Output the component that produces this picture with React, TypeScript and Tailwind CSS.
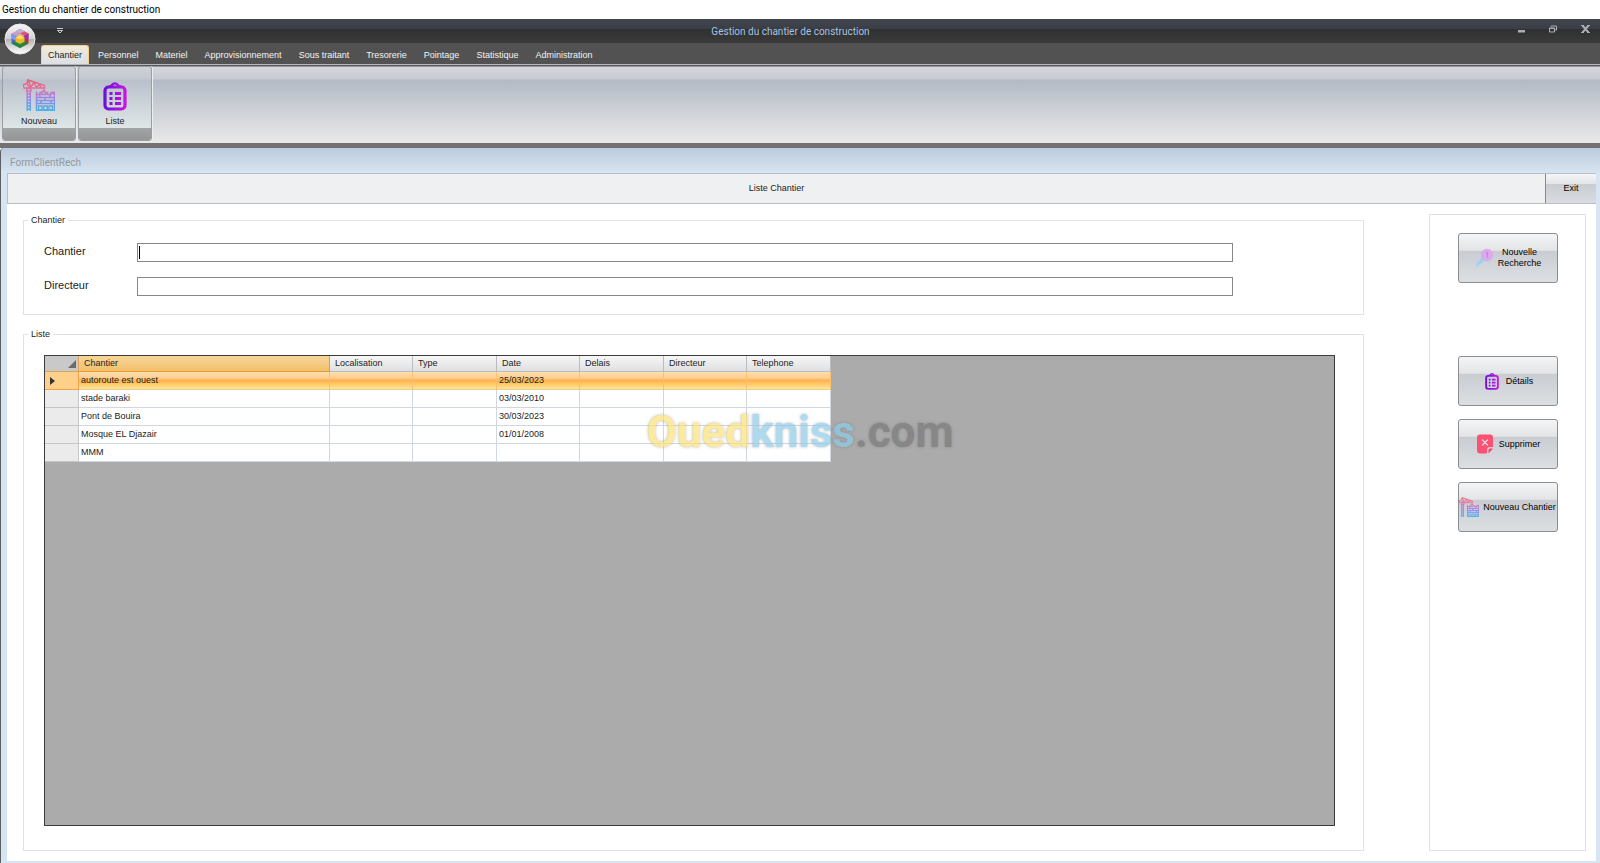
import { useState, type ReactNode } from 'react'

interface Chantier {
  nom: string
  localisation: string
  type: string
  date: string
  delais: string
  directeur: string
  telephone: string
}

const tabs = [
  'Chantier',
  'Personnel',
  'Materiel',
  'Approvisionnement',
  'Sous traitant',
  'Tresorerie',
  'Pointage',
  'Statistique',
  'Administration',
]

const columns: { key: keyof Chantier; label: string; width: string }[] = [
  { key: 'nom', label: 'Chantier', width: 'w-[251px]' },
  { key: 'localisation', label: 'Localisation', width: 'w-[83px]' },
  { key: 'type', label: 'Type', width: 'w-[84px]' },
  { key: 'date', label: 'Date', width: 'w-[83px]' },
  { key: 'delais', label: 'Delais', width: 'w-[84px]' },
  { key: 'directeur', label: 'Directeur', width: 'w-[83px]' },
  { key: 'telephone', label: 'Telephone', width: 'w-[84px]' },
]

const empty = { localisation: '', type: '', delais: '', directeur: '', telephone: '' }

const chantiers: Chantier[] = [
  { ...empty, nom: 'autoroute est ouest', date: '25/03/2023' },
  { ...empty, nom: 'stade baraki', date: '03/03/2010' },
  { ...empty, nom: 'Pont de Bouira', date: '30/03/2023' },
  { ...empty, nom: 'Mosque EL Djazair', date: '01/01/2008' },
  { ...empty, nom: 'MMM', date: '' },
]

function CraneIcon({ id, className }: { id: string; className: string }) {
  return (
    <svg viewBox="0 0 32 32" className={className} fill="none" stroke={`url(#${id})`} aria-hidden="true">
      <defs>
        <linearGradient id={id} gradientUnits="userSpaceOnUse" x1="0" y1="0" x2="0" y2="32">
          <stop offset="0" stopColor="#f0566f" />
          <stop offset="0.3" stopColor="#e4709f" />
          <stop offset="0.55" stopColor="#a67fe8" />
          <stop offset="1" stopColor="#3fb4ea" />
        </linearGradient>
      </defs>
      {/* jib */}
      <path d="M0.500 8.500V5.500l3.500-1L5 1l16.500 5.500V9H0.500M4 5l3 3.500M5 1l3 7 3-4.500 2.500 5 2.500-3 2.500 3M21 9v3.500" strokeWidth="1.400" />
      <path d="M18.500 12.500h4" strokeWidth="1.600" />
      {/* mast */}
      <path d="M3.500 9.500h4.500V12H3.500zM4.200 12v20M7.300 12v20M4.200 15h3M4.200 18h3M4.200 21h3M4.200 24h3M4.200 27h3M4.200 30h3" strokeWidth="1.400" />
      {/* building */}
      <path d="M13.500 12.500v19h18v-19M13.500 15.500h3.500v-2h2v2h3.500v-2h2v2h3.500v-2h2v2M13.500 18.500h18M13.500 21.500h18M13.500 24.500h18M17 15.500v3M22 18.500v3M27 15.500v3M18 21.500v3M28 21.500v3" strokeWidth="1.500" />
      <path d="M15.500 27h3.500v4h-3.500zM20.800 27h3.500v4h-3.500zM26 27h3.500v4H26z" strokeWidth="1.400" />
    </svg>
  )
}

function ClipboardIcon({ id, className }: { id: string; className: string }) {
  return (
    <svg viewBox="0 0 24 29" className={className} fill="none" aria-hidden="true">
      <defs>
        <linearGradient id={id} gradientUnits="userSpaceOnUse" x1="0" y1="0" x2="24" y2="0">
          <stop offset="0" stopColor="#6212d8" />
          <stop offset="1" stopColor="#cf14e6" />
        </linearGradient>
      </defs>
      <g stroke={`url(#${id})`}>
        <rect x="2" y="5" width="20" height="22" rx="3.500" strokeWidth="3.200" />
        <path d="M6.500 5c.3-1.200 1.200-1.500 2.200-1.500C9.500 1.700 10.500 1.300 12 1.300s2.500.4 3.300 2.200c1 0 1.900.3 2.200 1.500" strokeWidth="2.200" />
        <path d="M6.500 11.500h3M12 11.500h6M6.500 16.500h3M12 16.500h6M6.500 21.500h3M12 21.500h6" strokeWidth="3" />
      </g>
    </svg>
  )
}

function SearchIcon() {
  return (
    <svg viewBox="0 0 20 20" className="size-5 shrink-0" fill="none" aria-hidden="true">
      <defs>
        <linearGradient id="search" gradientUnits="userSpaceOnUse" x1="17" y1="3" x2="2" y2="18">
          <stop offset="0" stopColor="#eba6ec" />
          <stop offset="0.5" stopColor="#c3b4f0" />
          <stop offset="0.7" stopColor="#9fd0f2" />
          <stop offset="1" stopColor="#9edcf5" />
        </linearGradient>
      </defs>
      <circle cx="13" cy="7" r="5.500" fill="#dca8ee" stroke="url(#search)" strokeWidth="1.500" />
      <path d="M9 11l-6 6" stroke="url(#search)" strokeWidth="3.500" strokeLinecap="round" />
      <path d="M12 5.500l1.500-1V10" stroke="#c486ea" strokeWidth="1.200" />
    </svg>
  )
}

function DeleteIcon() {
  return (
    <svg viewBox="0 0 20 20" className="size-5 shrink-0" aria-hidden="true">
      <path d="M5 0.500h10a3 3 0 0 1 3 3V13h-3a3 3 0 0 0-3 3v3.500H5a3 3 0 0 1-3-3v-13a3 3 0 0 1 3-3z" fill="#fb5273" />
      <path d="M13.500 19.500V16a1.500 1.500 0 0 1 1.500-1.500h3z" fill="#fb4168" />
      <path d="M7.500 6l5 5M12.500 6l-5 5" stroke="#ffd5dd" strokeWidth="1.300" strokeLinecap="round" />
    </svg>
  )
}

function AppOrb() {
  return (
    <svg viewBox="0 0 32 32" className="size-8" aria-hidden="true">
      <defs>
        <linearGradient id="orb" x1="0" y1="0" x2="0" y2="1">
          <stop offset="0" stopColor="#f6f6f6" />
          <stop offset="0.48" stopColor="#d4d4d6" />
          <stop offset="0.52" stopColor="#b4b4b8" />
          <stop offset="1" stopColor="#ffffff" />
        </linearGradient>
      </defs>
      <circle cx="16" cy="16" r="15" fill="url(#orb)" stroke="#e9e9e9" />
      <path d="M16 6l8.500 4.500L16 15 7.500 10.500z" fill="#c9a0c8" />
      <path d="M16 6l8.500 4.500-4 2.200-8.700-4.500z" fill="#e2566a" />
      <path d="M16 6l-4.200 2.200 4.200 2.300 4.200-2.300z" fill="#b9b4dc" />
      <path d="M7.500 10.500L16 15v10l-8.500-4.500z" fill="#4667d8" />
      <path d="M7.500 10.500l4.200 2.200v5L7.500 15.500z" fill="#8798e6" />
      <path d="M24.500 10.500L16 15v10l8.500-4.500z" fill="#c92a35" />
      <path d="M24.500 10.500l-4.200 2.200v5l4.200-2.200z" fill="#8c3bb5" />
      <path d="M16 20l4.200-2.200 4.300 2.700L16 25l-8.500-4.500 4.200-2.700z" fill="#1f8a3a" />
      <path d="M16 12l4.500 2.300v4.500L16 21l-4.500-2.200v-4.500z" fill="#f0b92c" />
      <path d="M16 12l4.500 2.300L16 16.500l-4.500-2.200z" fill="#fbdc57" />
    </svg>
  )
}

function RibbonButton({ label, children }: { label: string; children: ReactNode }) {
  return (
    <button className="flex h-[75px] w-[74px] flex-col overflow-hidden rounded-[3px] border border-[#9a9da3] bg-[linear-gradient(#cfd2d7_0,#c3c8cf_12px,#b9c0ca_13px,#dfe7e8_62px)] shadow-[1px_0_0_#eceef0]">
      <span className="flex w-full flex-1 flex-col items-center justify-end gap-1 pb-px">
        {children}
        <span className="leading-3">{label}</span>
      </span>
      <span className="h-3 w-full bg-linear-to-b from-[#a2a5a5] to-[#949696]" />
    </button>
  )
}

function SideButton({ icon, children }: { icon: ReactNode; children: ReactNode }) {
  return (
    <button className="flex h-[50px] w-[100px] items-center justify-center gap-1 rounded-[3px] border border-[#8b8d90] bg-[linear-gradient(#f4f5f6_0%,#e2e4e5_34%,#c9cdd2_36%,#dcdfe2_100%)] text-center leading-[11px] whitespace-nowrap">
      {icon}
      <span>{children}</span>
    </button>
  )
}

export default function App() {
  const [activeTab, setActiveTab] = useState('Chantier')
  const [selected, setSelected] = useState(0)
  const [nom, setNom] = useState('')
  const [directeur, setDirecteur] = useState('')

  return (
    <div className="relative flex min-h-screen flex-col bg-white font-['Liberation_Sans',Arial,sans-serif] text-[9px] text-[#1c1c1c]">
      <div className="h-[19px] pl-0.5 font-['Roboto',sans-serif] text-[10px] leading-5 text-black">
        Gestion du chantier de construction
      </div>

      {/* Title bar and tabs */}
      <header className="relative">
        <div className="flex h-6 items-center bg-[linear-gradient(#41464f_0%,#3b3e47_40%,#2f3031_42%,#3b3b3b_100%)]">
          <button aria-label="Personnaliser" className="ml-[57px] text-[#c4c8cc]">
            <svg viewBox="0 0 6 6" className="size-1.5" fill="none" stroke="currentColor" aria-hidden="true">
              <path d="M0 0.500h6M0.500 2.500h5L3 5z" />
            </svg>
          </button>
          <h1 className="flex-1 text-center font-['Roboto',sans-serif] text-[10px] text-[#a9c4e6]">
            Gestion du chantier de construction
          </h1>
          <div className="flex items-center gap-6 pr-2.5 pb-1 text-[#a9aeb4]">
            <button aria-label="Réduire">
              <svg viewBox="0 0 7 8" className="h-2 w-[7px]" aria-hidden="true">
                <path d="M0 5h7v2.500H0z" fill="currentColor" />
              </svg>
            </button>
            <button aria-label="Restaurer">
              <svg viewBox="0 0 8 8" className="size-2" fill="none" stroke="currentColor" aria-hidden="true">
                <path d="M2 1.500V1h5.500v4H6M0.500 3h5v4h-5zM0.500 3.500h5" />
              </svg>
            </button>
            <button aria-label="Fermer">
              <svg viewBox="0 0 9 8" className="h-2 w-[9px]" fill="none" stroke="currentColor" aria-hidden="true">
                <path d="M1.500 0.500l6 7M7.500 0.500l-6 7" strokeWidth="2" />
                <path d="M0 0.500h3M6 0.500h3M0 7.500h3M6 7.500h3" />
              </svg>
            </button>
          </div>
        </div>
        <nav className="flex h-[21px] items-end gap-px bg-[#525252] pl-[41px]">
          {tabs.map(tab => (
            <button
              key={tab}
              onClick={() => setActiveTab(tab)}
              className={
                tab === activeTab
                  ? 'h-[19px] rounded-t-[3px] border border-b-0 border-[#f3cf8c] bg-linear-to-b from-[#f1ead9] to-[#dcdfe3] px-[6px] pt-px text-[#1c1c1c]'
                  : 'h-[19px] px-2 pt-0.5 text-[#f4f4f4]'
              }
            >
              {tab}
            </button>
          ))}
        </nav>
        <button aria-label="Menu" className="absolute top-1 left-1">
          <AppOrb />
        </button>
      </header>

      {/* Ribbon */}
      <div className="flex h-[79px] gap-0.5 border-t border-[#b5b7b9] bg-[linear-gradient(#55585c_0,#55585c_1px,#d5d7db_2px,#c6cad2_14px,#b3bac5_15px,#e9e9e9_100%)] pt-px pl-0.5">
        <RibbonButton label="Nouveau">
          <CraneIcon id="crane-lg" className="size-8" />
        </RibbonButton>
        <RibbonButton label="Liste">
          <ClipboardIcon id="clip-lg" className="h-[29px] w-6" />
        </RibbonButton>
      </div>
      <div className="h-[5px] bg-[#727070]" />

      {/* Child window */}
      <main className="flex flex-1 flex-col rounded-tl-[4px] border-l border-[#5c5f66] bg-[linear-gradient(#bccbdc_0,#d7e4f1_25px)] pr-1 pb-0.5 pl-1.5">
        <h2 className="h-[25px] pt-[5px] pl-[3px] font-['Roboto',sans-serif] text-[10px] leading-5 text-[#94999f]">
          FormClientRech
        </h2>
        <div className="flex h-[31px] border-y border-[#b9bec6] bg-[#eef0f2]">
          <div className="flex flex-1 items-center justify-center border-l border-[#b9bec6]">Liste Chantier</div>
          <button className="w-[51px] border-l border-[#85888e] bg-[linear-gradient(#f4f5f6_0%,#e2e4e5_34%,#c9cdd2_36%,#d9dce0_100%)] text-black">
            Exit
          </button>
        </div>

        <div className="flex flex-1 gap-[65px] bg-white pt-2.5 pr-2.5 pb-2.5 pl-4">
          <div className="flex min-w-0 flex-1 flex-col gap-[13px]">
            <fieldset className="border border-[#e0e2e3]">
              <legend className="ml-1 px-[3px] leading-3">Chantier</legend>
              <div className="flex flex-col gap-[15px] pt-[17px] pr-[130px] pb-[18px] pl-5 text-[11px]">
                <div className="flex">
                  <label htmlFor="chantier" className="w-[93px] leading-4">
                    Chantier
                  </label>
                  <div className="relative flex flex-1">
                    <input
                      id="chantier"
                      value={nom}
                      onChange={e => setNom(e.target.value)}
                      className="peer h-[19px] flex-1 border border-[#85878a] bg-white px-0.5 outline-none"
                    />
                    <span className="absolute top-[3px] left-[2px] h-[13px] w-px bg-black peer-focus:hidden" />
                  </div>
                </div>
                <div className="flex">
                  <label htmlFor="directeur" className="w-[93px] leading-4">
                    Directeur
                  </label>
                  <input
                    id="directeur"
                    value={directeur}
                    onChange={e => setDirecteur(e.target.value)}
                    className="h-[19px] flex-1 border border-[#85878a] bg-white px-0.5 outline-none"
                  />
                </div>
              </div>
            </fieldset>

            <fieldset className="flex flex-1 flex-col border border-[#e0e2e3]">
              <legend className="ml-1 px-[3px] leading-3">Liste</legend>
              <div className="mt-[15px] mr-7 mb-6 ml-5 flex-1 border border-[#3c3c3c] bg-[#ababab]">
                <table className="w-[786px] table-fixed border-separate border-spacing-0 text-left">
                  <thead>
                    <tr className="h-4">
                      <th className="w-[34px] border-r border-b border-[#d9a55c] bg-[#c9c9c9] p-0">
                        <svg viewBox="0 0 8 8" className="mr-0.5 ml-auto size-2" aria-hidden="true">
                          <path d="M8 0v8H0z" fill="#6b6b6b" />
                        </svg>
                      </th>
                      {columns.map((col, i) => (
                        <th
                          key={col.key}
                          className={`${col.width} p-0 pl-[5px] leading-[15px] font-normal ${
                            i === 0
                              ? 'border-r border-b border-[#e59b3c] bg-linear-to-b from-[#f7d59a] to-[#f2c169]'
                              : 'border-r border-b border-[#b9bcbf] bg-linear-to-b from-[#f6f6f6] to-[#dfe0e1]'
                          }`}
                        >
                          {col.label}
                        </th>
                      ))}
                    </tr>
                  </thead>
                  <tbody>
                    {chantiers.map((row, i) => (
                      <tr
                        key={row.nom}
                        onClick={() => setSelected(i)}
                        className={
                          i === selected
                            ? 'h-[18px] bg-[linear-gradient(#ffdfb0_0%,#fdcd8e_35%,#ffb04d_45%,#ffc766_65%,#ffec9c_100%)]'
                            : 'h-[18px] bg-white'
                        }
                      >
                        <td
                          className={
                            i === selected
                              ? 'border-r border-b border-[#f2a24a] bg-[#ffd08a] p-0 pl-[5px]'
                              : 'border-r border-b border-[#c3c7ca] bg-[#ebebeb] p-0'
                          }
                        >
                          {i === selected && (
                            <svg viewBox="0 0 5 8" className="h-2 w-[5px]" aria-hidden="true">
                              <path d="M0 0l5 4-5 4z" fill="#303338" />
                            </svg>
                          )}
                        </td>
                        {columns.map(col => (
                          <td
                            key={col.key}
                            className={
                              i === selected
                                ? 'border-r border-b border-r-[#fbbf70] border-b-[#e9cf98] p-0 pl-0.5'
                                : 'border-r border-b border-[#d0d7e0] p-0 pl-0.5'
                            }
                          >
                            {row[col.key]}
                          </td>
                        ))}
                      </tr>
                    ))}
                  </tbody>
                </table>
              </div>
            </fieldset>
          </div>

          <aside className="flex w-[157px] flex-col items-center border border-[#e0e2e3] pt-[18px] text-black">
            <SideButton icon={<SearchIcon />}>
              Nouvelle
              <br />
              Recherche
            </SideButton>
            <div className="mt-[73px] flex flex-col gap-[13px]">
              <SideButton icon={<ClipboardIcon id="clip-sm" className="h-[17px] w-5 shrink-0" />}>Détails</SideButton>
              <SideButton icon={<DeleteIcon />}>Supprimer</SideButton>
              <SideButton icon={<CraneIcon id="crane-sm" className="size-5 shrink-0" />}>Nouveau Chantier</SideButton>
            </div>
          </aside>
        </div>
      </main>

      {/* Watermark */}
      <div className="pointer-events-none absolute inset-0 flex items-center justify-center">
        <div className="font-['Roboto',sans-serif] text-[44px] leading-none font-bold opacity-70 [text-shadow:0_0_3px_#666666aa]">
          <span className="text-[#fbe276]">Oued</span>
          <span className="text-[#8ccbe9]">kniss</span>
          <span className="text-[#787878]">.com</span>
        </div>
      </div>
    </div>
  )
}
